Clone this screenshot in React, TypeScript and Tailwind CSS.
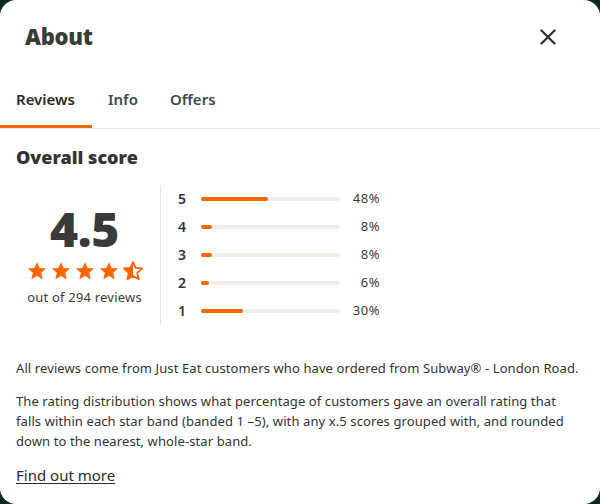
import { X } from "lucide-react";

const rows = [
  { star: 5, pct: 48 },
  { star: 4, pct: 8 },
  { star: 3, pct: 8 },
  { star: 2, pct: 6 },
  { star: 1, pct: 30 },
];

const STAR =
  "M12 2.2l2.9 6.4 7 .7-5.3 4.7 1.5 6.9L12 17.4l-6.1 3.5 1.5-6.9L2.1 9.3l7-.7z";

function Star({ half }: { half?: boolean }) {
  return (
    <svg viewBox="0 0 24 24" className="h-[22px] w-[22px]">
      <defs>
        <clipPath id="half-left">
          <rect x="0" y="0" width="12" height="24" />
        </clipPath>
      </defs>
      {half ? (
        <>
          <path d={STAR} fill="none" stroke="#f36805" strokeWidth="2" strokeLinejoin="round" />
          <path d={STAR} fill="#f36805" clipPath="url(#half-left)" />
        </>
      ) : (
        <path d={STAR} fill="#f36805" />
      )}
    </svg>
  );
}

export default function App() {
  return (
    <div className="h-[504px] w-[600px] bg-[#0b2a1b] font-['Noto_Sans',sans-serif]">
      <div className="flex h-full flex-col rounded-2xl bg-white text-[#2b2b2b]">
        <header className="flex items-center justify-between px-[25px] pt-[20px]">
          <h1 className="text-[22px] font-black tracking-[-0.3px] text-[#3a3a3a]">About</h1>
          <button className="mr-[14px] text-[#333]">
            <X size={26} strokeWidth={2.2} />
          </button>
        </header>

        <nav className="mt-[35px] flex border-b border-[#e6e6e6] text-[15px] font-semibold">
          <div className="w-[92px] border-b-[3px] border-[#f36805] pb-[14px] pl-[16px] text-[#2b2b2b]">
            Reviews
          </div>
          <div className="pb-[14px] pl-[16px] text-[#3f4a4c]">Info</div>
          <div className="pb-[14px] pl-[32px] text-[#3f4a4c]">Offers</div>
        </nav>

        <section className="px-[16px] pt-[15px]">
          <h2 className="text-[18px] font-black text-[#333]">Overall score</h2>

          <div className="mt-[14px] flex">
            <div className="flex w-[137px] flex-col items-center pt-[20px]">
              <div className="text-[48px] font-black leading-[48px] tracking-[-0.3px] text-[#3a3a3a]">4.5</div>
              <div className="mt-[7px] flex gap-[2px]">
                <Star />
                <Star />
                <Star />
                <Star />
                <Star half />
              </div>
              <div className="mt-[6px] text-[13px] tracking-[0.2px] text-[#3c3c3c]">out of 294 reviews</div>
            </div>

            <div className="ml-[7px] flex flex-col border-l border-[#e4e4e4] pl-[17px]">
              {rows.map((r) => (
                <div key={r.star} className="flex h-[28px] items-center">
                  <span className="w-[23px] text-[14px] font-semibold text-[#333]">{r.star}</span>
                  <div className="h-[4px] w-[139px] rounded-full bg-[#f2efea]">
                    <div
                      className="h-full rounded-full bg-[#f36805]"
                      style={{ width: `${Math.max(r.pct, 4)}%` }}
                    />
                  </div>
                  <span className="w-[40px] text-right text-[13px] tracking-[0.5px] text-[#3c3c3c]">{r.pct}%</span>
                </div>
              ))}
            </div>
          </div>

          <p className="mt-[33px] text-[13px] leading-[20px] tracking-[0.1px] text-[#333]">
            All reviews come from Just Eat customers who have ordered from Subway® - London Road.
          </p>
          <p className="mt-[13px] text-[13px] leading-[20px] tracking-[0.1px] text-[#333]">
            The rating distribution shows what percentage of customers gave an overall rating that falls
            within each star band (banded 1 –5), with any x.5 scores grouped with, and rounded down to the
            nearest, whole-star band.
          </p>
          <a className="mt-[13px] inline-block text-[15px] text-[#2b2b2b] underline underline-offset-2">
            Find out more
          </a>
        </section>
      </div>
    </div>
  );
}
